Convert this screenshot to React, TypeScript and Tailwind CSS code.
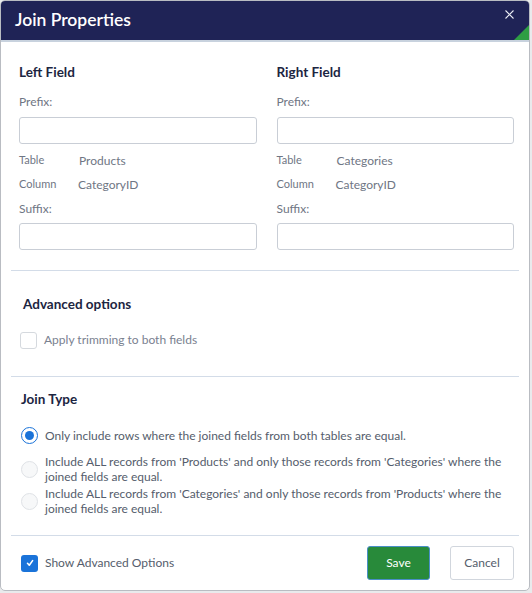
import React from "react";

const font = { fontFamily: 'Lato, "Noto Sans", sans-serif' };

function Input() {
  return <div className="h-[27px] rounded-[3px] border border-[#c9ced6] bg-white" />;
}

function FieldCol({ title, table }: { title: string; table: string }) {
  return (
    <div className="flex flex-col">
      <div className="text-[13.5px] font-bold leading-[18px] text-[#1c2541]">{title}</div>
      <div className="mt-[13px] text-[12px] leading-[16px] text-[#6f7684]">Prefix:</div>
      <div className="mt-[7px]"><Input /></div>
      <div className="mt-[8px] flex h-[17px] items-center">
        <span className="w-[60px] text-[11px] text-[#6f7684]">Table</span>
        <span className="text-[12px] text-[#6f7684]">{table}</span>
      </div>
      <div className="mt-[7px] flex h-[17px] items-center">
        <span className="w-[59px] text-[11px] text-[#6f7684]">Column</span>
        <span className="text-[12px] text-[#6f7684]">CategoryID</span>
      </div>
      <div className="mt-[8px] text-[12px] leading-[16px] text-[#6f7684]">Suffix:</div>
      <div className="mt-[6px]"><Input /></div>
    </div>
  );
}

function Radio({ checked }: { checked?: boolean }) {
  return checked ? (
    <div className="flex h-[17px] w-[17px] shrink-0 items-center justify-center rounded-full border-[1.5px] border-[#1a73d9] bg-white">
      <div className="h-[9px] w-[9px] rounded-full bg-[#1a73d9]" />
    </div>
  ) : (
    <div className="h-[17px] w-[17px] shrink-0 rounded-full border border-[#dfe2e6] bg-[#f7f8f9]" />
  );
}

export default function App() {
  return (
    <div className="h-[593px] w-[532px] bg-[#e9eaec]" style={font}>
      <div className="flex h-[591px] w-[530px] flex-col overflow-hidden rounded-[5px] border border-[#b9bcc2] bg-white">
        <div className="relative flex h-[41px] shrink-0 items-center border-b-2 border-[#c8d2de] bg-[#1f2356] pl-[14px]">
          <span className="text-[17.5px] font-semibold text-white">Join Properties</span>
          <svg className="absolute right-[15px] top-[9px]" width="9" height="9" viewBox="0 0 9 9">
            <path d="M0.5 0.5 L8.5 8.5 M8.5 0.5 L0.5 8.5" stroke="#e8eaf2" strokeWidth="1.1" />
          </svg>
          <div className="absolute bottom-0 right-0 h-0 w-0 border-b-[15px] border-l-[15px] border-b-[#2e9e44] border-l-transparent" />
        </div>
        <div className="grid grid-cols-2 gap-[20px] pl-[18px] pr-[15px] pt-[21px]">
          <FieldCol title="Left Field" table="Products" />
          <FieldCol title="Right Field" table="Categories" />
        </div>
        <div className="mx-[10px] mt-[20px] border-t border-[#d3dce8]" />
        <div className="pl-[22px] pt-[24px]">
          <div className="text-[13.5px] font-bold leading-[18px] text-[#1c2541]">Advanced options</div>
          <div className="mt-[18px] flex items-center gap-[7px]">
            <div className="-ml-[3px] h-[17px] w-[17px] rounded-[3px] border border-[#d5d9de] bg-white" />
            <span className="text-[12px] text-[#7a8190]">Apply trimming to both fields</span>
          </div>
        </div>
        <div className="mx-[10px] mt-[27px] border-t border-[#d3dce8]" />
        <div className="pl-[20px] pr-[14px] pt-[13px]">
          <div className="text-[13.5px] font-bold leading-[18px] text-[#1c2541]">Join Type</div>
          <div className="mt-[19px] flex items-center gap-[7px]">
            <Radio checked />
            <span className="text-[12px] leading-[16px] text-[#555d6c]">Only include rows where the joined fields from both tables are equal.</span>
          </div>
          <div className="mt-[10px] flex items-center gap-[7px]">
            <Radio />
            <span className="text-[12px] leading-[15px] text-[#555d6c]">Include ALL records from 'Products' and only those records from 'Categories' where the joined fields are equal.</span>
          </div>
          <div className="mt-[2px] flex items-center gap-[7px]">
            <Radio />
            <span className="text-[12px] leading-[15px] text-[#555d6c]">Include ALL records from 'Categories' and only those records from 'Products' where the joined fields are equal.</span>
          </div>
        </div>
        <div className="mx-[10px] mt-[19px] border-t border-[#d3dce8]" />
        <div className="flex items-center pl-[20px] pr-[15px] pt-[10px]">
          <div className="flex h-[17px] w-[17px] items-center justify-center rounded-[3px] bg-[#1a73d9]">
            <svg width="10" height="10" viewBox="0 0 10 10"><path d="M2.5 5.3 L4.3 7.2 L7.6 2.6" stroke="white" strokeWidth="1.6" fill="none" strokeLinecap="round" strokeLinejoin="round" /></svg>
          </div>
          <span className="ml-[7px] text-[12px] text-[#555d6c]">Show Advanced Options</span>
          <div className="flex-1" />
          <button className="h-[34px] w-[63px] rounded-[3px] border border-[#4a8fc7] bg-[#288a3a] text-[12px] text-white">Save</button>
          <button className="ml-[20px] h-[34px] w-[64px] rounded-[3px] border border-[#d1d6dd] bg-white text-[12px] text-[#555d6c]">Cancel</button>
        </div>
      </div>
    </div>
  );
}
